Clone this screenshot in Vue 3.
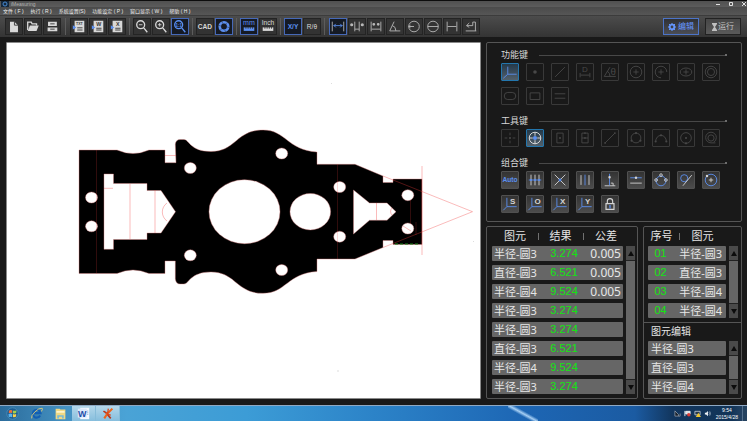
<script setup>
import { ref } from 'vue'

const circle = (x, y, r, ry = r) => `M${x - r} ${y}a${r} ${ry} 0 1 0 ${2 * r} 0a${r} ${ry} 0 1 0 ${-2 * r} 0z`

const menus = ['文件 ( F )', '执行 ( R )', '系统设置(S)', '功能设定 ( P )', '窗口显示 ( W )', '帮助 ( H )']

// part keys: d = path, f = filled, b = accent blue, t = text at x/y, k = dark ink
const magnifier = { d: `${circle(7.5, 6.5, 4.5)}M11 10l4 5`, w: 1.5 }
const docBody = { d: 'M4 2h11v13h-11z', f: true }

const toolGroups = ref([
  {
    wide: true,
    items: [
      { name: '新建', parts: [{ d: 'M4.500 3h5l4 4v8h-9z', f: true }, { d: 'M9.500 3v4h4', k: true }] },
      { name: '打开', parts: [{ d: 'M3 12.500v-9h4l1 2h5v2', w: 1.5 }, { d: 'M5.500 7.500h10l-2.500 6h-10z', f: true }] },
      { name: '保存', parts: [{ d: 'M4.500 3h10v5h-10zM4 9.500h11v4.500h-11z', f: true }, { d: 'M7 5.500h5M7 11.500h5', k: true }] },
    ],
  },
  {
    items: [
      { name: '导出TXT', parts: [docBody, { t: 'TXT', x: 9.5, y: 7, s: 4, k: true }, { d: 'M7 10h6M7 12.500h6', k: true }, { d: 'M2 7l4 2.500l-4 2.500z', f: true, b: true }] },
      { name: '导出Word', parts: [docBody, { t: 'W', x: 10, y: 8, s: 6, k: true }, { d: 'M7 10.500h6M7 12.500h6', k: true }, { d: 'M2 7l4 2.500l-4 2.500z', f: true, b: true }] },
      { name: '导出Excel', parts: [docBody, { t: 'X', x: 10, y: 8, s: 6, k: true }, { d: 'M7 10.500h6M7 12.500h6', k: true }, { d: 'M2 7l4 2.500l-4 2.500z', f: true, b: true }] },
    ],
  },
  {
    items: [
      { name: '缩小', parts: [magnifier, { d: 'M5.500 6.500h4' }] },
      { name: '放大', parts: [magnifier, { d: 'M5.500 6.500h4M7.500 4.500v4' }] },
      { name: '适合窗口', active: true, parts: [{ ...magnifier, b: true }, { t: '1:1', x: 7.5, y: 8.5, s: 5, b: true }] },
    ],
  },
  {
    items: [
      { name: 'CAD', parts: [{ t: 'CAD', x: 9, y: 11, s: 7.5 }] },
      { name: '光圈', active: true, parts: [{ d: circle(9, 8.5, 4.8), w: 3, b: true }, { d: 'M6 2l2 3.500M13.500 3.500l-3 2.500M15.500 10l-3-1M11 15.500l-1-3M4 13.500l2.500-2.500M2.500 7l3 1', k: true, w: 0.6 }] },
    ],
  },
  {
    items: [
      { name: '毫米', active: true, parts: [{ t: 'mm', x: 9, y: 7, s: 8, b: true, n: true }, { d: 'M3 9.500h12v4h-12z', f: true, b: true }, { d: 'M5.500 9v2M8 9v2M10.500 9v2M13 9v2', k: true }] },
      { name: '英寸', parts: [{ t: 'Inch', x: 9, y: 7, s: 7.5, n: true }, { d: 'M3 9.500h12v4h-12z', f: true }, { d: 'M5.500 9v2M8 9v2M10.500 9v2M13 9v2', k: true }] },
    ],
  },
  {
    last: true,
    items: [
      { name: '直角坐标', active: true, parts: [{ t: 'X/Y', x: 9, y: 11, s: 7.5, b: true }] },
      { name: '极坐标', parts: [{ t: 'R/θ', x: 9, y: 11, s: 7.5, n: true }] },
    ],
  },
  {
    end: true,
    items: [
      { name: '距离', active: true, parts: [{ d: 'M2.500 3v11M15.500 3v11' }, { d: 'M4 7.500h10M6.500 5.500l-2 2l2 2M11.500 5.500l2 2l-2 2', b: true }] },
      { name: '外距', parts: [{ d: 'M6.500 3v11M11.500 3v11M6.500 11.500h5' }, { d: circle(3, 6.5, 1.8) + circle(15, 6.5, 1.8), f: true }] },
      { name: '内距', parts: [{ d: 'M3.500 3v11M14.500 3v11M4 11.500h10' }, { d: circle(6.5, 6, 1.6) + circle(11.5, 6, 1.6), f: true }] },
      { name: '角度', parts: [{ d: 'M8 3l-5 10.500h12M6 7.500q4 1 4 6' }] },
      { name: '半径', parts: [{ d: `${circle(9, 8.5, 6)}M3 8.500h6M5 7l-2 1.500l2 1.500` }] },
      { name: '直径', parts: [{ d: `${circle(9, 8.5, 6)}M3 8.500h12` }] },
      { name: '宽度', parts: [{ d: 'M3.500 3v11M14.500 3v11M4 8.500h10' }] },
      { name: '圆弧', parts: [{ d: 'M4 7.500h7v-4h3v10M7 4.500l-3 3l3 2M3 13.500h12' }] },
    ],
  },
])

const axes = { d: 'M5.500 2v10h11M5.500 12l-4 4', b: true }
const axisKey = (t) => [axes, { t, x: 12, y: 9, s: 9 }]

const sections = [
  {
    title: '功能键',
    kind: 'dim',
    items: [
      { name: '坐标系', active: true, parts: [{ d: 'M6.500 3v8.500h10M6.500 11.500l-5 4.500', b: true }] },
      { name: '点', parts: [{ d: circle(9, 9, 2), f: true }] },
      { name: '线', parts: [{ d: 'M3.500 14.500l11-11' }] },
      { name: '距离', parts: [{ t: 'D', x: 9, y: 8.5, s: 9 }, { d: 'M3.500 10v5M14.500 10v5M4 12.500h10' }] },
      { name: '角', parts: [{ t: 'θ', x: 12.5, y: 12, s: 11 }, { d: 'M9 3.500l-6.500 10.500h13M6 8q3 2 3 6' }] },
      { name: '圆', parts: [{ d: `${circle(9, 9, 6.5)}M6 9h6M9 6v6` }] },
      { name: '弧', parts: [{ d: 'M9 15.500a6.500 6.500 0 1 1 6.500-6.500M6 9h6M9 6v6' }] },
      { name: '椭圆', parts: [{ d: `${circle(9, 9, 6.5, 4.5)}M6 9h6M9 6v6` }] },
      { name: '圆环', parts: [{ d: circle(9, 9, 6.5) + circle(9, 9, 4) }] },
      { name: '键槽', parts: [{ d: 'M6.500 5h5a4 4 0 0 1 0 8h-5a4 4 0 0 1 0-8z' }] },
      { name: '矩形', parts: [{ d: 'M3.500 5.500h11v7.500h-11z' }] },
      { name: '平行线', parts: [{ d: 'M3 6.500h12M3 11.500h12' }] },
    ],
  },
  {
    title: '工具键',
    kind: 'dim',
    items: [
      { name: '十字', parts: [{ d: 'M3 9h3M12 9h3M9 3v3M9 12v3' }, { d: circle(9, 9, 1.2), f: true }] },
      { name: '寻边', active: true, parts: [{ d: `${circle(9, 9, 6.5)}M2.500 9h4M11.500 9h4M9 2.500v4M9 11.500v4` }, { d: circle(9, 9, 2.3), b: true, f: true }] },
      { name: '框选', parts: [{ d: 'M5.500 3.500h7v11h-7z' }, { d: circle(9, 9, 1.1), f: true }] },
      { name: '分框', parts: [{ d: 'M5.500 3.500h7v11h-7zM5.500 9h7' }, { d: circle(9, 3.5, 1) + circle(9, 9, 1), f: true }] },
      { name: '两点线', parts: [{ d: 'M3.500 14.500l11-11' }, { d: circle(3.5, 14.5, 1) + circle(14.5, 3.5, 1), f: true }] },
      { name: '三点圆', parts: [{ d: circle(9, 9, 5.5) }, { d: circle(9, 3.5, 1.2) + circle(4, 12, 1.2) + circle(14, 12, 1.2), f: true }] },
      { name: '三点弧', parts: [{ d: 'M3 13a6 7 0 0 1 12 0' }, { d: circle(9, 6, 1.2) + circle(3, 13, 1.2) + circle(15, 13, 1.2), f: true }] },
      { name: '圆心', parts: [{ d: circle(9, 9, 6) }, { d: circle(9, 9, 1.2) + circle(9, 15, 1.2), f: true }] },
      { name: '同心', parts: [{ d: `${circle(9, 9, 3.5)}M14 14.500h-5a6 6 0 1 1 6-6q0 4-3 5` }] },
    ],
  },
  {
    title: '组合键',
    kind: 'solid',
    items: [
      { name: '自动', parts: [{ t: 'Auto', x: 9, y: 11.5, s: 7.5, b: true }] },
      { name: '中点', parts: [{ d: 'M4.500 3v12M9 3v12M13.500 3v12' }, { d: 'M2 9h14', b: true }, { d: circle(4.5, 9, 1.1) + circle(9, 9, 1.1) + circle(13.5, 9, 1.1), b: true, f: true }] },
      { name: '交点', parts: [{ d: 'M3 3l12 12M15 3l-12 12' }, { d: circle(9, 9, 1.6), b: true, f: true }] },
      { name: '中线', parts: [{ d: 'M4.500 3.500v11M13.500 3.500v11' }, { d: 'M9 3v12', b: true }] },
      { name: '垂线', parts: [{ d: 'M3 15.500h12M10 12.500h2.500v3' }, { d: 'M8.500 2v13', b: true }, { d: circle(8.5, 6, 1.4), f: true }] },
      { name: '平行', parts: [{ d: 'M2.500 12.500h13' }, { d: 'M2.500 6.500h13', b: true }, { d: circle(9, 6.5, 1.4), f: true }] },
      { name: '组圆', parts: [{ d: circle(9, 10, 5.5), b: true }, { d: circle(9, 3.5, 1.5) + circle(3.5, 9, 1.5) + circle(14.5, 9, 1.5) }] },
      { name: '切线', parts: [{ d: circle(7, 7, 4), b: true }, { d: 'M15.500 3.500l-10 12' }] },
      { name: '圆心距', parts: [{ d: circle(9, 9, 6.5), b: true }, { d: 'M6.500 9h5M9 6.500v5' }, { d: circle(4.5, 4.5, 1.4), f: true }] },
      { name: 'S', parts: axisKey('S') },
      { name: 'O', parts: axisKey('O') },
      { name: 'X', parts: axisKey('X') },
      { name: 'Y', parts: axisKey('Y') },
      { name: '锁定', parts: [{ d: 'M4.500 8.500h9v6.500h-9zM6 8v-2a3 3 0 0 1 6 0v2', w: 1.3 }, { d: 'M9 10v4', b: true, w: 1.5 }] },
    ],
  },
]

const results = [
  ['半径-圆3', '3.274', '0.005'],
  ['直径-圆3', '6.521', '0.005'],
  ['半径-圆4', '9.524', '0.005'],
  ['半径-圆3', '3.274', ''],
  ['半径-圆3', '3.274', ''],
  ['直径-圆3', '6.521', ''],
  ['半径-圆4', '9.524', ''],
  ['半径-圆3', '3.274', ''],
]
const elements = [['01', '半径-圆3'], ['02', '直径-圆3'], ['03', '半径-圆4'], ['04', '半径-圆4']]
const edits = ['半径-圆3', '直径-圆3', '半径-圆4']

const mode = ref('edit')

function pick(group, item) {
  if (group.items.some(i => i.active)) group.items.forEach(i => { i.active = i === item })
}
</script>

<template>
  <div class="desktop">
    <header class="titlebar">
      <svg class="app-icon" viewBox="0 0 8 6">
        <rect width="8" height="6" fill="#14283c" />
        <circle cx="4" cy="3" r="2" fill="none" stroke="#4a8ad0" />
      </svg>
      <span class="app-name">iMeasuring</span>
      <div class="window-buttons">
        <button aria-label="最小化"><svg viewBox="0 0 6 6"><path d="M1 3.500h4" /></svg></button>
        <button aria-label="最大化"><svg viewBox="0 0 6 6"><path d="M1.500 1.500h3v3h-3z" /></svg></button>
        <button aria-label="关闭"><svg viewBox="0 0 6 6"><path d="M1 1l4 4M5 1l-4 4" /></svg></button>
      </div>
    </header>

    <nav class="menubar">
      <button v-for="m in menus" :key="m">{{ m }}</button>
    </nav>

    <div class="toolbar">
      <div
        v-for="(group, gi) in toolGroups"
        :key="gi"
        class="tool-group"
        :class="{ wide: group.wide, last: group.last, end: group.end }"
      >
        <button
          v-for="item in group.items"
          :key="item.name"
          class="tool"
          :class="{ active: item.active }"
          :aria-label="item.name"
          @click="pick(group, item)"
        >
          <svg viewBox="0 0 18 17">
            <template v-for="(p, i) in item.parts" :key="i">
              <text v-if="p.t" :x="p.x" :y="p.y" :font-size="p.s" :class="{ blue: p.b, ink: p.k, thin: p.n }">{{ p.t }}</text>
              <path v-else :d="p.d" :stroke-width="p.w || 1" :class="{ fill: p.f, blue: p.b, ink: p.k }" />
            </template>
          </svg>
        </button>
      </div>
      <div class="modes">
        <button :class="{ active: mode === 'edit' }" @click="mode = 'edit'">
          <svg viewBox="0 0 8 8">
            <circle cx="4" cy="4" r="2.300" fill="none" stroke="currentColor" stroke-width="1.800" />
            <path d="M4 0v1M4 7v1M0 4h1M7 4h1M1 1l1 1M6 6l1 1M7 1l-1 1M1 7l1-1" stroke="currentColor" />
          </svg>
          编辑
        </button>
        <button :class="{ active: mode === 'run' }" @click="mode = 'run'">
          <svg class="narrow" viewBox="0 0 5 8">
            <path d="M0 .500h5M0 7.500h5" stroke="currentColor" />
            <path d="M0 1h5l-2 3l2 3h-5l2-3z" fill="currentColor" />
          </svg>
          运行
        </button>
      </div>
    </div>

    <main class="workspace">
      <div class="canvas">
        <svg viewBox="7 43 473 355" preserveAspectRatio="xMidYMid meet">
          <path
            class="part"
            fill-rule="evenodd"
            d="M79 150H117Q125 153.500 133 153.500T149 150H165V162.700H176L175.300 144Q176 139.500 180 139.500H184C189 139.500 190 151.500 211 151.500C236 151.500 236 130 263 130C286 130 287 150 317 152V164.300H355L383 176V182.500H393V179H422V244.500H393V240.500H383V247.500L355 259H317V271.500C287 273.500 286 293.300 263 293.300C236 293.300 236 272 211 272C190 272 189 284 184 284H180Q176 284 175.300 279V261H165V273.500H149Q141 270 133 270T117 273.500H79Z
              M104 174H113.500V183.500H147V190.500H161L175.500 211.700L161 233H147V239.500H113.500V249.300H104Z
              M353.500 190L369.500 203H387L396 211.700L387 220.300H369.500L353.500 234Z"
          />
          <g class="hole">
            <ellipse cx="244.500" cy="211.700" rx="35.500" ry="32" />
            <ellipse cx="310.300" cy="211.700" rx="20.300" ry="18.200" />
            <ellipse cx="91.500" cy="197.500" rx="6" ry="5.500" />
            <ellipse cx="91.500" cy="226.300" rx="6" ry="5.500" />
            <ellipse cx="190.300" cy="168" rx="6" ry="5.500" />
            <ellipse cx="190.300" cy="255.300" rx="6" ry="5.500" />
            <ellipse cx="281.700" cy="153.500" rx="6" ry="5.500" />
            <ellipse cx="281.700" cy="270" rx="6" ry="5.500" />
            <ellipse cx="339.700" cy="187" rx="6" ry="5.500" />
            <ellipse cx="339.700" cy="236.700" rx="6" ry="5.500" />
            <ellipse cx="407.800" cy="195.200" rx="6" ry="5.500" />
            <ellipse cx="407.800" cy="228.500" rx="6" ry="5.500" />
          </g>
          <path class="trace" d="M130 184V239M155 190V233M104 188.300H113M165 155.500H176M376.500 203V220M383 176L472.500 211.700L383 247.500M422 166V255M167 203A11 11 0 0 0 167 221M392 208A5 5 0 0 0 392 215M403 226l8 5" />
          <path class="trace faint" d="M96.500 150V273.500M337.500 164V259M410.500 200V224M416 222v13" />
          <path class="scan" d="M395 244H418" />
          <path class="speck" d="M331 83.500h1M337 371h2M473 241.500h1" />
        </svg>
      </div>

      <div class="side">
        <section class="panel keys">
          <div v-for="s in sections" :key="s.title" class="key-section">
            <h2>{{ s.title }}</h2>
            <div class="key-grid">
              <button
                v-for="item in s.items"
                :key="item.name"
                class="key"
                :class="[s.kind, { active: item.active }]"
                :aria-label="item.name"
              >
                <svg viewBox="0 0 18 18">
                  <template v-for="(p, i) in item.parts" :key="i">
                    <text v-if="p.t" :x="p.x" :y="p.y" :font-size="p.s" :class="{ blue: p.b }">{{ p.t }}</text>
                    <path v-else :d="p.d" :stroke-width="p.w || 1" :class="{ fill: p.f, blue: p.b }" />
                  </template>
                </svg>
              </button>
            </div>
          </div>
        </section>

        <section class="panel results">
          <table>
            <thead>
              <tr><th>图元</th><th>结果</th><th>公差</th></tr>
            </thead>
            <tbody>
              <tr v-for="(r, i) in results" :key="i">
                <td>{{ r[0] }}</td>
                <td class="value">{{ r[1] }}</td>
                <td class="tolerance">{{ r[2] }}</td>
              </tr>
            </tbody>
          </table>
          <div class="scrollbar">
            <button aria-label="向上"><svg viewBox="0 0 6 5"><path d="M3 0l3 5h-6z" /></svg></button>
            <button aria-label="向下"><svg viewBox="0 0 6 5"><path d="M3 5l3-5h-6z" /></svg></button>
          </div>
        </section>

        <section class="panel elements">
          <div class="element-list">
            <table>
              <thead>
                <tr><th>序号</th><th>图元</th></tr>
              </thead>
              <tbody>
                <tr v-for="e in elements" :key="e[0]">
                  <td class="value">{{ e[0] }}</td>
                  <td class="element">{{ e[1] }}</td>
                </tr>
              </tbody>
            </table>
            <div class="scrollbar">
              <button aria-label="向上"><svg viewBox="0 0 6 5"><path d="M3 0l3 5h-6z" /></svg></button>
              <button aria-label="向下"><svg viewBox="0 0 6 5"><path d="M3 5l3-5h-6z" /></svg></button>
            </div>
          </div>
          <div class="element-edit">
            <h3>图元编辑</h3>
            <div class="edit-body">
              <ul>
                <li v-for="e in edits" :key="e">{{ e }}</li>
              </ul>
              <div class="scrollbar flush">
                <button aria-label="向上"><svg viewBox="0 0 6 5"><path d="M3 0l3 5h-6z" /></svg></button>
                <button aria-label="向下"><svg viewBox="0 0 6 5"><path d="M3 5l3-5h-6z" /></svg></button>
              </div>
            </div>
          </div>
        </section>
      </div>
    </main>

    <footer class="taskbar">
      <button class="task" aria-label="开始">
        <svg viewBox="0 0 16 16">
          <circle cx="8" cy="8" r="7" fill="#1c5c92" stroke="#4f93bd" />
          <path d="M3.500 4.500q2-1.500 4-.500v3.500q-2-1-4 .200z" fill="#f0703a" />
          <path d="M8.500 4.200q2 1 4.500-.200l-.500 3.500q-2 1-4 .200z" fill="#a5d04a" />
          <path d="M3 8.700q2.500-1 4.500-.200v4q-2-1-4 0z" fill="#5cb4ec" />
          <path d="M8.500 8.700q2 1 4 0v3q-2 1.500-4 .500z" fill="#fbd04a" />
        </svg>
      </button>
      <button class="task" aria-label="浏览器">
        <svg viewBox="0 0 16 16" fill="none">
          <path d="M12.500 10.500a4.800 4.800 0 1 1 .500-3h-8" stroke="#125fb4" stroke-width="2.600" />
          <path d="M2 14q-1-3 4-8t9-4.500q1 1-1 4" stroke="#f3d673" />
        </svg>
      </button>
      <button class="task" aria-label="文件夹">
        <svg viewBox="0 0 16 16">
          <path d="M2 2h5l1 1h6v12h-12z" fill="#efd883" />
          <path d="M3 5h10v2h-10z" fill="#fff6cf" />
          <path d="M4 10h8v4h-2v-2h-4v2h-2z" fill="#77b9d8" />
        </svg>
      </button>
      <button class="task open" aria-label="Word">
        <svg viewBox="0 0 16 16">
          <path d="M4 1h11v14h-11z" fill="#f4f8ff" />
          <path d="M1 2h11v11h-11z" fill="#dce9fb" />
          <text x="6.500" y="12" font-size="11" font-weight="700" text-anchor="middle" fill="#1f4fa8">W</text>
          <path d="M12 5h2M12 7h2M12 9h2" stroke="#8fa9d6" />
        </svg>
      </button>
      <button class="task open" aria-label="测量">
        <svg viewBox="0 0 16 16" fill="none">
          <path d="M3 5l3 2l6 7" stroke="#b8371c" stroke-width="2" />
          <path d="M14 2l-6 6l-4 6" stroke="#ee6419" stroke-width="2.500" />
          <path d="M9 2l-1 7l4 1" stroke="#dc4518" stroke-width="1.500" />
        </svg>
      </button>
      <div class="tray">
        <svg viewBox="0 0 8 8"><path d="M1 7v-6l4 4v2zM5 7h2v-3" fill="#1a222c" stroke="#c7d0d8" stroke-width=".6" /></svg>
        <svg viewBox="0 0 8 8"><path d="M1 1v6M2 1.500h5v3h-5z" stroke="#eef2f6" fill="#d8dee5" /><circle cx="5.500" cy="5.500" r="2" fill="#d83a35" /></svg>
        <svg viewBox="0 0 8 8"><path d="M1 1.500h6v4h-6z" fill="#26384a" stroke="#dce4ec" stroke-width=".8" /><path d="M5 3l3 5h-6z" fill="#f0c52e" /></svg>
        <svg viewBox="0 0 8 8"><path d="M1 3h1.500l2-2v6l-2-2h-1.500z" fill="#f1f5f9" /><path d="M5.500 2.500q1.500 1.500 0 3M6.500 1.500q2 2.500 0 5" stroke="#d5dfe9" stroke-width=".6" fill="none" /></svg>
      </div>
      <div class="clock">
        <span>9:54</span>
        <span>2015/4/28</span>
      </div>
      <button class="show-desktop" aria-label="显示桌面"></button>
    </footer>
  </div>
</template>

<style>
body {
  margin: 0;
  background: #191919;
}
</style>

<style scoped>
.desktop {
  display: flex;
  flex-direction: column;
  min-height: 100vh;
  background: #191919;
  color: #e6e6e6;
  font-family: "Liberation Sans", "Noto Sans CJK SC", sans-serif;
}

button {
  margin: 0;
  padding: 0;
  border: 0;
  background: none;
  color: inherit;
  font: inherit;
}

svg {
  display: block;
}

h2,
h3,
ul {
  margin: 0;
  padding: 0;
  font-weight: 400;
  list-style: none;
}

/* Title and menu */
.titlebar {
  display: flex;
  align-items: center;
  height: 6px;
  padding-left: 1px;
  border-top: 1px solid #0c0c0c;
  background: linear-gradient(#505050, #5c5c5c);
}

.app-icon {
  width: 8px;
  height: 6px;
}

.app-name {
  margin-left: 2px;
  font-size: 5px;
  line-height: 6px;
  color: #b4b4b4;
}

.window-buttons {
  display: flex;
  gap: 7px;
  margin-left: auto;
}

.window-buttons svg {
  width: 6px;
  height: 6px;
  fill: none;
  stroke: #e0e0e0;
}

.menubar {
  display: flex;
  gap: 7px;
  height: 8px;
  padding-left: 3px;
  background: linear-gradient(#4a4a4a, #565656);
  font-size: 5px;
  line-height: 8px;
  color: #f0f0f0;
}

/* Toolbar */
.toolbar {
  display: flex;
  align-items: center;
  height: 21px;
  padding: 0 6px 0 5px;
  border-top: 1px solid #3c3c3c;
  background: linear-gradient(#4c4c4c, #343434);
}

.tool-group {
  display: flex;
  gap: 1px;
  margin-right: 3px;
  padding-right: 3px;
  border-right: 1px solid #5c5c5c;
}

.tool-group.wide {
  margin-right: 4px;
  padding-right: 4px;
}

.tool-group.last {
  margin-right: 4px;
}

.tool-group.end {
  border-right: 0;
}

.tool {
  box-sizing: border-box;
  width: 18px;
  height: 17px;
  border: 1px solid #242424;
  background: #333333;
  color: #d8d8d8;
}

.end .tool {
  color: #b8b8b8;
}

.tool svg {
  width: 16px;
  height: 15px;
}

.tool path,
.key path {
  fill: none;
  stroke: currentColor;
}

.tool path.fill,
.key path.fill {
  fill: currentColor;
  stroke: none;
}

.tool .blue,
.key .blue {
  color: #5b8ff0;
}

.tool .ink {
  color: #333333;
}

.tool text,
.key text {
  fill: currentColor;
  font-weight: 700;
  text-anchor: middle;
}

.tool text.thin {
  font-weight: 400;
}

.tool.active {
  border-color: #4669b8;
  background: #151a24;
}

.modes {
  display: flex;
  gap: 6px;
  margin-left: auto;
}

.modes button {
  display: flex;
  align-items: center;
  justify-content: center;
  gap: 1px;
  box-sizing: border-box;
  width: 36px;
  height: 17px;
  border: 1px solid #222222;
  background: linear-gradient(#464646, #5a5a5a);
  color: #c0c0c0;
  font-size: 8px;
  line-height: 15px;
}

.modes button.active {
  gap: 2px;
  border-color: #4c74c8;
  background: linear-gradient(#2f3136, #4b4d54);
  color: #6496ff;
}

.modes svg {
  width: 8px;
  height: 8px;
}

.modes svg.narrow {
  width: 5px;
}

/* Workspace */
.workspace {
  display: grid;
  flex: 1;
  grid-template-columns: minmax(0, 1fr) 256px;
  gap: 5px;
  padding: 5px 5px 6px 6px;
}

.canvas {
  display: flex;
  border: 1px solid #8a8a8a;
  border-radius: 1px;
  background: #ffffff;
}

.canvas svg {
  width: 100%;
  height: 100%;
}

.part {
  fill: #000000;
  stroke: #d88080;
  stroke-width: 0.4;
}

.hole {
  fill: #ffffff;
  stroke: #d88080;
  stroke-width: 0.4;
}

.trace {
  fill: none;
  stroke: rgba(240, 60, 60, 0.35);
}

.trace.faint {
  stroke: rgba(240, 60, 60, 0.2);
}

.scan {
  stroke: #1c8a1c;
  stroke-dasharray: 3 2;
}

.speck {
  stroke: #dddddd;
}

.side {
  display: grid;
  grid-template-columns: 152px minmax(0, 1fr);
  grid-template-rows: auto 1fr;
  gap: 4px 5px;
}

.panel {
  border: 1px solid #555555;
  border-radius: 2px;
}

/* Key pad */
.keys {
  display: flex;
  flex-direction: column;
  grid-column: 1 / -1;
  gap: 10px;
  padding: 6px 14px 8px;
}

.key-section h2 {
  display: flex;
  align-items: center;
  gap: 11px;
  font-size: 9px;
  line-height: 12px;
  color: #d8d8d8;
}

.key-section h2::before {
  order: 1;
  flex: 1;
  height: 1px;
  background: #484848;
  content: '';
}

.key-section h2::after {
  order: 2;
  width: 2px;
  height: 2px;
  margin-left: -11px;
  border-radius: 1px;
  background: #8a8a8a;
  content: '';
}

.key-grid {
  display: grid;
  grid-template-columns: repeat(9, 1fr);
  row-gap: 6px;
  margin-top: 2px;
}

.key {
  box-sizing: border-box;
  width: 18px;
  height: 18px;
  border: 1px solid #393939;
  border-radius: 1px;
  color: #484848;
}

.key svg {
  width: 16px;
  height: 16px;
}

.key.dim text {
  font-weight: 400;
}

.key.solid {
  border-color: #505050;
  background: linear-gradient(#333333, #4c4c4c);
  color: #d4d4d4;
}

.key.active {
  border-color: #2376ad;
  background: linear-gradient(#24394a, #52606b);
  color: #e4e4e4;
}

/* Data lists */
.results {
  display: flex;
  gap: 3px;
  padding: 0 2px 0 5px;
}

table {
  flex: 1;
  border-spacing: 0 4px;
  table-layout: fixed;
}

th {
  height: 11px;
  padding: 0;
  font-size: 11px;
  font-weight: 400;
  line-height: 11px;
}

th + th {
  background: linear-gradient(#707070, #707070) left center / 1px 7px no-repeat;
}

td {
  height: 15px;
  padding: 0;
  background: #666666;
  font-size: 11px;
  line-height: 15px;
  white-space: nowrap;
}

td:first-child {
  border-radius: 1px 0 0 1px;
}

td:last-child {
  border-radius: 0 1px 1px 0;
}

.results th:nth-child(1) {
  width: 46px;
}

.results th:nth-child(2) {
  width: 45px;
}

.results th:nth-child(3) {
  padding-left: 6px;
}

td,
li {
  font-family: "Noto Sans", "Noto Sans CJK SC", sans-serif;
}

.results td:first-child {
  padding-left: 2px;
}

td.value {
  color: #12e612;
  font-family: "Liberation Sans", sans-serif;
  text-align: center;
}

.results td.value {
  padding-left: 7px;
}

.tolerance {
  padding-right: 2px;
  font-size: 12px;
  text-align: right;
}

.scrollbar {
  display: flex;
  flex-direction: column;
  justify-content: space-between;
  width: 9px;
  margin: 19px 0 4px;
  background: #666666;
}

.scrollbar.flush {
  margin: 0;
}

.scrollbar button {
  display: flex;
  align-items: center;
  justify-content: center;
  height: 15px;
  background: #4a4a4a;
}

.scrollbar button:first-child {
  border-bottom: 1px solid #222222;
}

.scrollbar button:last-child {
  border-top: 1px solid #222222;
}

.scrollbar svg {
  width: 6px;
  height: 5px;
  fill: #0c0c0c;
}

.element-list,
.edit-body {
  display: flex;
  gap: 3px;
}

.element-list {
  padding: 0 3px 0 4px;
  border-bottom: 1px solid #555555;
}

.elements th:first-child {
  width: 33px;
  padding-right: 4px;
}

.elements td.value {
  padding-right: 6px;
}

.element {
  padding-right: 4px;
  text-align: right;
}

.element-edit {
  padding: 0 3px 4px 4px;
}

.element-edit h3 {
  padding-left: 3px;
  font-size: 10px;
  line-height: 18px;
}

.edit-body ul {
  display: flex;
  flex: 1;
  flex-direction: column;
  gap: 4px;
}

.edit-body li {
  padding-left: 3px;
  border-radius: 1px;
  background: #666666;
  font-size: 11px;
  line-height: 15px;
}

/* Taskbar */
.taskbar {
  display: flex;
  align-items: center;
  height: 15px;
  border-top: 1px solid #8fa9c4;
  background:
    linear-gradient(29deg, transparent 40%, rgba(190, 225, 255, 0.85) 50%, transparent 60%) 508px 0 / 30px 100% no-repeat,
    linear-gradient(90deg, #2b6c9c 0, #4592c2 9%, #4aa3d6 17%, #3c9cd6 33%, #2c83c8 50%, #1d66b4 70%, #1b5ba2 85%, #12365e 90%, #123458 98%, #2b4866 100%);
}

.task {
  display: flex;
  justify-content: center;
  width: 24px;
}

.task svg {
  width: 13px;
  height: 13px;
}

.task.open {
  box-sizing: border-box;
  padding: 1px 0;
  border-right: 1px solid #86bcd9;
  background: linear-gradient(#b4d7ea, #86bedd);
}

.tray {
  display: flex;
  gap: 3px;
  margin-left: auto;
}

.tray svg {
  width: 7px;
  height: 7px;
}

.clock {
  display: flex;
  flex-direction: column;
  align-items: center;
  margin: 0 4px 0 5px;
  font-size: 5px;
  line-height: 7px;
  color: #ffffff;
}

.show-desktop {
  align-self: stretch;
  width: 5px;
  border-left: 1px solid #54708c;
  background: #24425f;
}
</style>
